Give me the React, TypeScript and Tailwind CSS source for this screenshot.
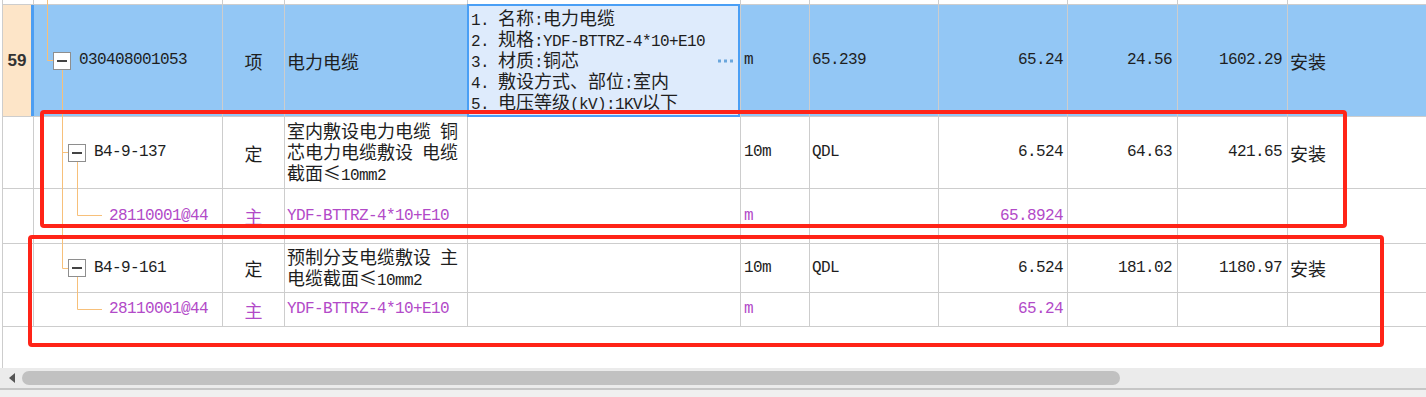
import React from "react";

const CJK = /([\u2264\u2e80-\u9fff\u3000-\u303f\uff00-\uffef]+)/;

// latin runs stay mono (9px advance), CJK runs go full width 18px
function T({ s }: { s: string }) {
  const parts = s.split(CJK);
  return (
    <>
      {parts.map((p, i) =>
        i % 2 === 1 ? (
          <span
            key={i}
            className="font-['Noto_Sans_CJK_SC',sans-serif] text-[18px] leading-[14px] tracking-normal"
          >
            {p}
          </span>
        ) : p ? (
          <span key={i}>{p}</span>
        ) : null
      )}
    </>
  );
}

function Cell({
  w,
  className = "",
  children,
}: {
  w: string;
  className?: string;
  children?: React.ReactNode;
}) {
  return (
    <div className={`${w} shrink-0 h-full flex items-center border-r border-[#cdcdcd] ${className}`}>
      {children}
    </div>
  );
}

function Toggle() {
  return (
    <div className="w-[18px] h-[18px] shrink-0 border border-[#8e8e8e] bg-white flex items-center justify-center">
      <div className="w-[10px] h-[2px] bg-[#444]" />
    </div>
  );
}

type Row = {
  h: string;
  kind: "item" | "quota" | "material";
  code: string;
  type: string;
  name: string[];
  unit: string;
  expr: string;
  qty: string;
  price: string;
  total: string;
  major: string;
};

const ROWS: Row[] = [
  {
    h: "h-[72px]",
    kind: "quota",
    code: "B4-9-137",
    type: "定",
    name: ["室内敷设电力电缆 铜", "芯电力电缆敷设 电缆", "截面≤10mm2"],
    unit: "10m",
    expr: "QDL",
    qty: "6.524",
    price: "64.63",
    total: "421.65",
    major: "安装",
  },
  {
    h: "h-[55px]",
    kind: "material",
    code: "28110001@44",
    type: "主",
    name: ["YDF-BTTRZ-4*10+E10"],
    unit: "m",
    expr: "",
    qty: "65.8924",
    price: "",
    total: "",
    major: "",
  },
  {
    h: "h-[49px]",
    kind: "quota",
    code: "B4-9-161",
    type: "定",
    name: ["预制分支电缆敷设 主", "电缆截面≤10mm2"],
    unit: "10m",
    expr: "QDL",
    qty: "6.524",
    price: "181.02",
    total: "1180.97",
    major: "安装",
  },
  {
    h: "h-[34px]",
    kind: "material",
    code: "28110001@44",
    type: "主",
    name: ["YDF-BTTRZ-4*10+E10"],
    unit: "m",
    expr: "",
    qty: "65.24",
    price: "",
    total: "",
    major: "",
  },
];

const FEATURES = [
  "1. 名称:电力电缆",
  "2. 规格:YDF-BTTRZ-4*10+E10",
  "3. 材质:铜芯",
  "4. 敷设方式、部位:室内",
  "5. 电压等级(kV):1KV以下",
];

function DataRow({ r }: { r: Row }) {
  const purple = r.kind === "material";
  return (
    <div className={`flex ${r.h} border-b border-[#cdcdcd] ${purple ? "text-[#b24ac8]" : "text-[#1e1e1e]"}`}>
      <Cell w="w-[32px]" className="border-l" />
      <Cell w="w-[189px]">
        {r.kind === "quota" ? (
          <div className="flex items-center ml-[34px] gap-[8px]">
            <Toggle />
            <span className="text-[#1e1e1e]">{r.code}</span>
          </div>
        ) : (
          <span className="pl-[75px]">{r.code}</span>
        )}
      </Cell>
      <Cell w="w-[62px]" className="justify-center">
        <T s={r.type} />
      </Cell>
      <Cell w="w-[183px]" className="pl-[2px]">
        <div className={r.name.length > 1 ? "pt-[3px]" : ""}>
          {r.name.map((l) => (
            <div key={l} className="whitespace-pre h-[21px]">
              <T s={l} />
            </div>
          ))}
        </div>
      </Cell>
      <Cell w="w-[273px]" />
      <Cell w="w-[69px]" className="pl-[3px]">{r.unit}</Cell>
      <Cell w="w-[129px]" className="pl-[2px]">{r.expr}</Cell>
      <Cell w="w-[129px]" className="justify-end pr-[4px]">{r.qty}</Cell>
      <Cell w="w-[110px]" className="justify-end pr-[5px]">{r.price}</Cell>
      <Cell w="w-[110px]" className="justify-end pr-[5px]">{r.total}</Cell>
      <div className="flex-1 h-full flex items-center pl-[2px]">
        <T s={r.major} />
      </div>
    </div>
  );
}

export default function App() {
  return (
    <div className="relative w-[1426px] h-[397px] overflow-hidden bg-white font-['Liberation_Mono',monospace] text-[16px] leading-[21px] tracking-[-0.6px] text-[#1e1e1e]">
      <div className="ml-[2px]">
        {/* partially visible row above */}
        <div className="flex h-[5px] border-b border-[#cdcdcd]">
          <Cell w="w-[32px]" className="border-l" />
          <Cell w="w-[189px]" />
          <Cell w="w-[62px]" />
          <Cell w="w-[183px]" />
          <Cell w="w-[273px]" />
          <Cell w="w-[69px]" />
          <Cell w="w-[129px]" />
          <Cell w="w-[129px]" />
          <Cell w="w-[110px]" />
          <Cell w="w-[110px]" />
        </div>

        {/* selected bill item 59 */}
        <div className="flex h-[112px] border-b border-[#cdcdcd] bg-[#93c7f5]">
          <div className="w-[32px] shrink-0 h-full flex items-center justify-center border-l border-l-[#cdcdcd] border-r-[3px] border-r-[#4d9ef2] bg-[#fde5c8] font-['Liberation_Sans',sans-serif] font-bold text-[17px] tracking-normal text-[#333]">
            59
          </div>
          <Cell w="w-[189px]">
            <div className="flex items-center ml-[19px] gap-[8px]">
              <Toggle />
              <span>030408001053</span>
            </div>
          </Cell>
          <Cell w="w-[62px]" className="justify-center">
            <T s="项" />
          </Cell>
          <Cell w="w-[183px]" className="pl-[2px]">
            <T s="电力电缆" />
          </Cell>
          <Cell w="w-[273px]" className="relative">
            <div className="absolute -left-[1px] -top-[1px] right-0 -bottom-[1px] border-2 border-[#4a9ff5] bg-[#deebfc] overflow-hidden">
              <div className="pl-[2px] pt-[4px]">
                {FEATURES.map((f) => (
                  <div key={f} className="whitespace-pre h-[21px]">
                    <T s={f} />
                  </div>
                ))}
              </div>
              <div className="absolute right-[5px] top-1/2 -translate-y-1/2 flex gap-[3px]">
                <div className="w-[3px] h-[3px] bg-[#6aa6dc]" />
                <div className="w-[3px] h-[3px] bg-[#6aa6dc]" />
                <div className="w-[3px] h-[3px] bg-[#6aa6dc]" />
              </div>
            </div>
          </Cell>
          <Cell w="w-[69px]" className="pl-[3px]">m</Cell>
          <Cell w="w-[129px]" className="pl-[2px]">65.239</Cell>
          <Cell w="w-[129px]" className="justify-end pr-[4px]">65.24</Cell>
          <Cell w="w-[110px]" className="justify-end pr-[5px]">24.56</Cell>
          <Cell w="w-[110px]" className="justify-end pr-[5px]">1602.29</Cell>
          <div className="flex-1 h-full flex items-center pl-[2px]">
            <T s="安装" />
          </div>
        </div>

        {ROWS.map((r, i) => (
          <DataRow key={i} r={r} />
        ))}

        <div className="h-[41px] border-l border-[#cdcdcd]" />
      </div>

      {/* horizontal scrollbar */}
      <div className="h-[20px] bg-[#ebebeb] flex items-center">
        <div className="ml-[9px] w-0 h-0 border-y-[5px] border-y-transparent border-r-[6px] border-r-[#555]" />
        <div className="ml-[7px] w-[1098px] h-[14px] rounded-full bg-[#c1c1c1]" />
      </div>
      <div className="h-[2px] bg-[#c6c6c6]" />
      <div className="h-[7px] bg-[#f0f0f0]" />

      {/* tree connector lines */}
      <svg className="absolute left-0 top-0 pointer-events-none" width="1426" height="330">
        <g stroke="#f7c07a" strokeWidth="1" fill="none">
          <path d="M47.5 0 V60.5 H53" />
          <path d="M62.5 70 V268.5 H68" />
          <path d="M62.5 152.5 H68" />
          <path d="M77.5 162 V215.5 H102" />
          <path d="M77.5 277 V309.5 H102" />
        </g>
      </svg>

      {/* red annotation frames */}
      <div className="absolute left-[40px] top-[110px] w-[1307px] h-[118px] border-4 border-[#ff2418] rounded-[4px] pointer-events-none" />
      <div className="absolute left-[28px] top-[235px] w-[1356px] h-[112px] border-4 border-[#ff2418] rounded-[4px] pointer-events-none" />
    </div>
  );
}
